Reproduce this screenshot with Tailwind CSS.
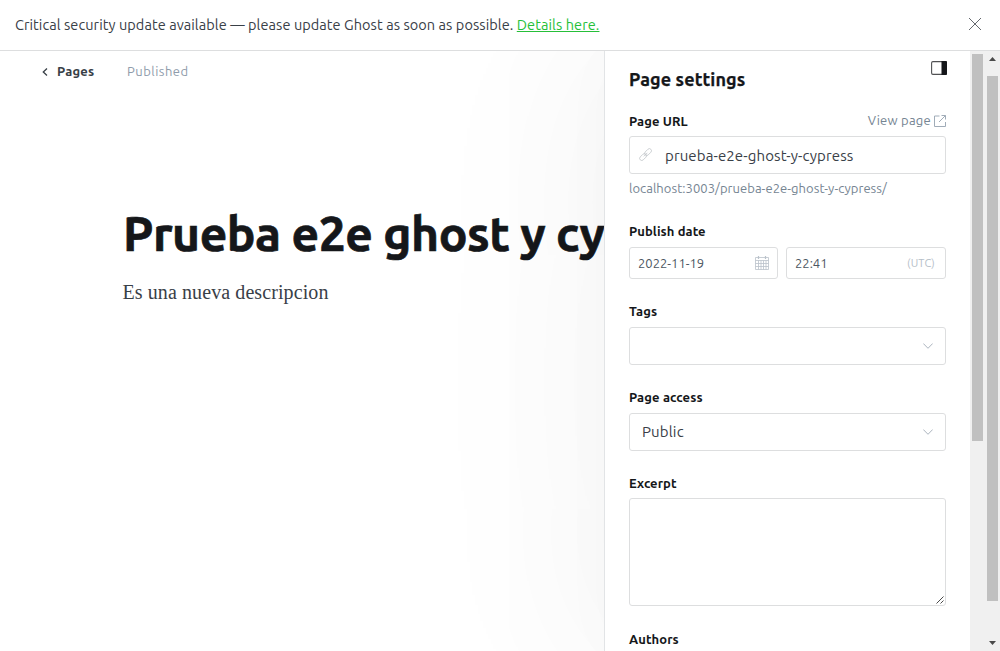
<!DOCTYPE html>
<html lang="en">
<head>
<meta charset="utf-8">
<title>Page settings</title>
<script src="https://cdn.jsdelivr.net/npm/@tailwindcss/browser@4"></script>
</head>
<body class="flex h-[651px] w-[1000px] flex-col overflow-hidden bg-white font-['Ubuntu','Noto_Sans',sans-serif] text-[#394047]">
  <header class="flex h-[51px] shrink-0 items-center justify-between border-b border-[#dddedf] pl-[15px] pr-[19px]">
    <p class="whitespace-nowrap text-[14.5px] leading-5 tracking-[0.067px]">Critical security update available — please update Ghost as soon as possible. <a class="tracking-[0.08px] text-[#26bf39] underline">Details here.</a></p>
    <svg class="mt-[-2px] size-3" viewBox="0 0 12 12" fill="none" stroke="#54585d" stroke-width=".9"><path d="M0 0l12 12M12 0L0 12"/></svg>
  </header>
  <div class="flex min-h-0 flex-1 overflow-hidden">
    <main class="w-[604px] shrink-0 overflow-hidden">
      <nav class="flex h-[41px] items-center pl-[42px] text-[13px]">
        <svg class="mr-[9px] h-2 w-[6px]" viewBox="0 0 6 8" fill="none" stroke="#394047" stroke-width="1.3"><path d="M5 .6L1.3 4L5 7.4"/></svg>
        <span class="w-[70px] font-semibold tracking-[0.2px]">Pages</span>
        <span class="tracking-[0.48px] text-[#8f9cab]">Published</span>
      </nav>
      <h1 class="mt-[109px] whitespace-nowrap pl-[123px] text-[48px] font-bold leading-[64px] tracking-[-0.5px] text-[#15171a] [-webkit-text-stroke:0.7px_#15171a]">Prueba e2e ghost y cypress</h1>
      <p class="mt-[13px] pl-[122.5px] font-['Liberation_Serif',serif] text-[20px] leading-[28px] tracking-[0.09px]">Es una nueva descripcion</p>
    </main>
    <aside class="relative w-[366px] shrink-0 border-l border-[#e2e4e6] bg-white pl-6 pr-6 shadow-[0_0_200px_30px_rgba(0,0,0,0.045),0_0_60px_rgba(0,0,0,0.02)]">
      <div class="flex h-[60px] items-start justify-between">
        <h2 class="mt-[16px] text-[18px] font-bold leading-6 tracking-[0.1px] text-[#15171a] [-webkit-text-stroke:0.25px_#15171a]">Page settings</h2>
        <svg class="mr-[-1px] mt-[10px] h-[14px] w-4" viewBox="0 0 16 14"><rect x=".6" y=".6" width="14.8" height="12.8" rx="1.300" fill="#fff" stroke="#15171a" stroke-opacity=".75" stroke-width="1.1"/><path d="M10.500 0H15a1 1 0 0 1 1 1v12a1 1 0 0 1-1 1h-4.500z" fill="#15171a"/></svg>
      </div>
      <div class="flex h-[25px] items-start justify-between text-[13px] leading-5">
        <span class="font-semibold tracking-[0.09px] text-[#15171a]">Page URL</span>
        <span class="mt-[-1px] flex items-center tracking-[0.25px] text-[#758492]">View page
          <svg class="ml-[3px] mt-[2px] size-3" viewBox="0 0 12 12" fill="none" stroke="#a0acb8" stroke-width="1"><path d="M5.500 1H.5v10.500h11V7M7.500.5h4v4M11.500.5L5 7"/></svg>
        </span>
      </div>
      <div class="flex h-[38px] items-center rounded-[3px] border border-[#dddedf] pl-[10px] text-[15px] tracking-[0.11px]">
        <svg class="ml-[-1px] mr-[13px] mt-[-1px] size-[13px]" viewBox="0 0 13 13" fill="none" stroke="#c3c7cb" stroke-width=".8"><g transform="rotate(-45 6.500 6.500)"><rect x="-1" y="4.500" width="8" height="4.200" rx="2.100"/><rect x="6" y="4.500" width="8" height="4.200" rx="2.100"/><path d="M4 6.600h5"/></g></svg>
        <span class="mt-[2px]">prueba-e2e-ghost-y-cypress</span>
      </div>
      <p class="mt-1 h-[43px] text-[13px] leading-5 tracking-[0.05px] text-[#758492]">localhost:3003/prueba-e2e-ghost-y-cypress/</p>
      <p class="h-[26px] text-[13px] font-semibold leading-5 tracking-[0.08px] text-[#15171a]">Publish date</p>
      <div class="flex h-8 gap-2 text-[13px]">
        <div class="flex w-[149px] items-center justify-between rounded-[3px] border border-[#dddedf] px-2 text-[#4c5661]">
          <span class="mt-px">2022-11-19</span>
          <svg class="mt-[-1px] size-[14px]" viewBox="0 0 14 14" fill="none" stroke="#bac2ca" stroke-width=".8"><path d="M.5 1.500h13v12H.5zM.5 4.500h13M.5 7.500h13M.5 10.500h13M3.500 4.500v9M6 4.500v9M8.500 4.500v9M11 4.500v9"/><path d="M3.500 0v3M10.500 0v3" stroke-width="1.200"/></svg>
        </div>
        <div class="flex w-[160px] items-center justify-between rounded-[3px] border border-[#dddedf] pl-2 pr-[10px] text-[#4c5661]">
          <span class="mt-px">22:41</span><span class="text-[11px] tracking-[0.17px] text-[#b5bec8]">(UTC)</span>
        </div>
      </div>
      <p class="mt-[22px] h-[26px] text-[13px] font-semibold leading-5 tracking-[0.08px] text-[#15171a]">Tags</p>
      <div class="flex h-[38px] items-center justify-end rounded-[3px] border border-[#dddedf] pr-3">
        <svg class="h-[6px] w-[10px]" viewBox="0 0 10 6" fill="none" stroke="#abb4be" stroke-width="1"><path d="M.3.5L5 5.300L9.700.5"/></svg>
      </div>
      <p class="mt-[22px] h-[26px] text-[13px] font-semibold leading-5 tracking-[0.12px] text-[#15171a]">Page access</p>
      <div class="flex h-[38px] items-center justify-between rounded-[3px] border border-[#dddedf] pl-3 pr-3 text-[15px] tracking-[0.15px]">
        <span>Public</span>
        <svg class="h-[6px] w-[10px]" viewBox="0 0 10 6" fill="none" stroke="#abb4be" stroke-width="1"><path d="M.3.5L5 5.300L9.700.5"/></svg>
      </div>
      <p class="mt-[22px] h-[25px] text-[13px] font-semibold leading-5 tracking-[0.08px] text-[#15171a]">Excerpt</p>
      <div class="flex h-[108px] items-end justify-end rounded-[3px] border border-[#dddedf] p-px">
        <svg class="size-2" viewBox="0 0 8 8" fill="none" stroke="#4b4b4b" stroke-width="1"><path d="M.5 7.500l7-7M4.500 7.500l3-3"/></svg>
      </div>
      <p class="mt-[23px] text-[13px] font-semibold leading-5 tracking-[0.08px] text-[#15171a]">Authors</p>
    </aside>
    <div class="relative flex w-[30px] shrink-0 gap-1 bg-[#f0f0f0] pl-[2px]">
      <div class="mt-[3px] h-[387px] w-[11px] bg-[#c0c0c0]"></div>
      <div class="flex w-[11px] flex-col items-center">
        <svg class="mt-[6px] h-1 w-[7px] shrink-0" viewBox="0 0 7 4" fill="#4a4a4a"><path d="M0 4L3.500 0L7 4z"/></svg>
        <div class="mt-[15px] h-[525px] w-[11px] shrink-0 bg-[#c0c0c0]"></div>
        <svg class="mt-10 h-1 w-[7px] shrink-0" viewBox="0 0 7 4" fill="#4a4a4a"><path d="M0 0h7L3.500 4z"/></svg>
      </div>
    </div>
  </div>
</body>
</html>
